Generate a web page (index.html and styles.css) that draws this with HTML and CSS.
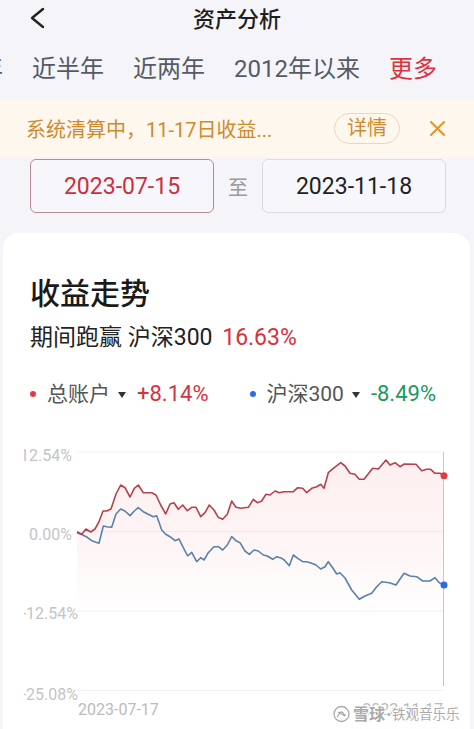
FILE: index.html
```html
<!DOCTYPE html>
<html lang="zh-CN">
<head>
  <meta charset="UTF-8">
  <title>资产分析</title>
  <link rel="stylesheet" href="styles.css">
</head>
<body>
  <header class="topbar">
    <svg class="back" viewBox="0 0 16 22"><polyline points="13,2 2,11 13,20"/></svg>
    <h1>资产分析</h1>
    <span></span>
  </header>

  <nav class="tabs">
    <div class="tabs-track">
      <span>近一年</span>
      <span>近半年</span>
      <span>近两年</span>
      <span>2012年以来</span>
      <span class="more">更多</span>
    </div>
  </nav>

  <div class="notice">
    <span class="notice-text">系统清算中，11-17日收益...</span>
    <span class="notice-btn">详情</span>
    <svg class="notice-close" viewBox="0 0 15 15"><path d="M1 1L14 14M14 1L1 14"/></svg>
  </div>

  <div class="range">
    <div class="date active">2023-07-15</div>
    <span class="to">至</span>
    <div class="date">2023-11-18</div>
  </div>

  <section class="card">
    <div class="card-head">
      <h2>收益走势</h2>
      <p class="beat">期间跑赢 沪深300 <span class="up pct">16.63%</span></p>
      <div class="legend">
        <span class="dot red"></span>
        <span class="name">总账户</span>
        <span class="caret"></span>
        <span class="val up">+8.14%</span>
        <span class="dot blue second"></span>
        <span class="name">沪深300</span>
        <span class="caret"></span>
        <span class="val down">-8.49%</span>
      </div>
    </div>

    <svg class="chart" viewBox="3 408 467 321" width="467" height="321">
      <defs>
        <linearGradient id="redFill" gradientUnits="userSpaceOnUse" x1="0" y1="460" x2="0" y2="615">
          <stop offset="0" stop-color="#f04a55" stop-opacity="0.09"/>
          <stop offset="0.6" stop-color="#f04a55" stop-opacity="0.05"/>
          <stop offset="1" stop-color="#f04a55" stop-opacity="0"/>
        </linearGradient>
        <clipPath id="labelClip"><rect x="24" y="408" width="446" height="321"/></clipPath>
      </defs>

      <g class="grid">
        <line x1="77" y1="452" x2="443" y2="452"/>
        <line x1="77" y1="531.5" x2="443" y2="531.5"/>
        <line x1="77" y1="611" x2="443" y2="611"/>
        <line x1="77" y1="690.5" x2="443" y2="690.5"/>
      </g>

      <g class="ylabels" clip-path="url(#labelClip)">
        <text x="72" y="460.7">12.54%</text>
        <text x="72" y="539.7">0.00%</text>
        <text x="78" y="618.7">-12.54%</text>
        <text x="78" y="699.7">-25.08%</text>
      </g>

      <polygon class="area" points="77,531.7 81.7,534.3 86,529 90.7,532 95,529 99,521.7 103,511 106.7,511 111,509 116,494 120.7,485 125,487.7 130,497 134.3,488.3 138.3,485 143.3,492.7 151.7,492.7 156,495 160.7,505 165.7,514 170,504 174,502.7 178.3,509.3 182.7,505 187.3,510.7 191.7,507.3 196,507.3 200.7,516.7 205,512.7 209.3,505 214,510 218.3,517.3 222.7,519.3 227.3,514.3 231.7,501 236,507.3 240.7,508.3 248.3,507.3 253.3,499.3 257.3,502.7 261.7,501 266,494.3 270,495 275,491 279.3,492.7 284,491.7 293.3,491.7 297.7,487.7 302.7,488.3 306.7,492.7 311.7,488.3 316.7,486.7 320.7,484.3 324,488.3 328.3,472.7 333.3,468.3 340.7,462.7 345,466 350,473.3 355,474.3 359.3,479.3 364,479.3 372.7,468.3 378.3,469 386,460 390,465 395,462.7 400,466.7 404.3,464 416,464.3 421.7,470.7 426.7,469.3 430.7,469.3 435,473.3 440,473.3 444,475.7 444,690 77,690"/>

      <line class="cursor" x1="443.5" y1="452" x2="443.5" y2="686"/>

      <polyline class="line-blue" points="77,532.7 82.7,535 87.3,537.3 91.7,540.7 99,543.3 103.3,526 106.7,526.7 111.7,527.3 116,514 120.7,509 125,511 130,515.7 134.3,511 138.3,507.7 143.3,511.7 148.3,514.3 153.3,516.7 156.7,515.7 161.7,530 165.7,534.3 170,536.7 175,540.7 179,539 183.3,547.7 187.7,556 191.7,552.3 196.7,561.7 200.7,557.7 204,560 208.3,552.7 214,546.7 218.3,546.7 222.7,550 227.3,545 231.7,536.7 236,540.7 240,542.7 245,551 249.3,554.3 254,550 258.3,551 263.3,555 267.3,556 272.7,559.3 276.7,556.7 281.7,558.3 284.3,560 289.3,565.7 293.3,555 297.7,558.3 302.7,561.7 306.7,561.7 311.7,563.3 316,565 320.7,569 325,566.7 328.3,561.7 332.7,567.7 336.7,574 340,572.7 345,578 351.7,590 359.3,599.3 365,596 371.7,593.3 376.7,586.7 381.7,581.7 389.3,582.7 396,585 404,573.3 410,576 416.7,576.7 422.7,581 430,581 435,577.7 439.3,582.7 444,585"/>

      <polyline class="line-red" points="77,531.7 81.7,534.3 86,529 90.7,532 95,529 99,521.7 103,511 106.7,511 111,509 116,494 120.7,485 125,487.7 130,497 134.3,488.3 138.3,485 143.3,492.7 151.7,492.7 156,495 160.7,505 165.7,514 170,504 174,502.7 178.3,509.3 182.7,505 187.3,510.7 191.7,507.3 196,507.3 200.7,516.7 205,512.7 209.3,505 214,510 218.3,517.3 222.7,519.3 227.3,514.3 231.7,501 236,507.3 240.7,508.3 248.3,507.3 253.3,499.3 257.3,502.7 261.7,501 266,494.3 270,495 275,491 279.3,492.7 284,491.7 293.3,491.7 297.7,487.7 302.7,488.3 306.7,492.7 311.7,488.3 316.7,486.7 320.7,484.3 324,488.3 328.3,472.7 333.3,468.3 340.7,462.7 345,466 350,473.3 355,474.3 359.3,479.3 364,479.3 372.7,468.3 378.3,469 386,460 390,465 395,462.7 400,466.7 404.3,464 416,464.3 421.7,470.7 426.7,469.3 430.7,469.3 435,473.3 440,473.3 444,475.7"/>

      <circle class="end-red" cx="444" cy="475.7" r="3.5"/>
      <circle class="end-blue" cx="444" cy="585" r="3.5"/>

      <text class="xlabel" x="78" y="714.7">2023-07-17</text>
      <text class="xlabel" x="443" y="714.7" text-anchor="end">2023-11-17</text>

      <!-- 水印 -->
      <g class="wm">
        <circle cx="341.5" cy="714" r="7.5"/>
        <path d="M337 717c2-1 2-5 4.5-5s2 4 4.5 3M338 712l7 4"/>
      </g>
      <text class="wm-text big" x="353" y="720">雪球</text>
      <text class="wm-text" x="382" y="719">·</text>
      <text class="wm-text" x="392" y="719">铁观音乐乐</text>
    </svg>
  </section>
</body>
</html>
```

FILE: styles.css
```css
body {
  margin: 0;
  width: 474px;
  height: 729px;
  overflow: hidden;
  background: #f5f5f9;
  font-family: Roboto, "Noto Sans CJK SC", sans-serif;
  color: #1f1f1f;
}

.topbar {
  display: grid;
  grid-template-columns: 1fr auto 1fr;
  height: 40px;
}

.back {
  width: 16px;
  height: 22px;
  margin: 7px 0 0 30px;
  fill: none;
  stroke: #222;
  stroke-width: 2.4;
  stroke-linecap: round;
  stroke-linejoin: round;
}

.topbar h1 {
  margin: 0;
  font-size: 22px;
  font-weight: 500;
  line-height: 40px;
}

.tabs {
  height: 60px;
  overflow: hidden;
}

.tabs-track {
  display: flex;
  gap: 29px;
  margin-left: -69px;
  font-size: 24px;
  line-height: 58px;
  color: #555a64;
  white-space: nowrap;
}

.tabs-track .more {
  color: #e0313f;
}

.notice {
  display: flex;
  align-items: center;
  height: 57px;
  padding: 0 29px 0 26px;
  background: #fdf7ee;
  color: #d08a2b;
  font-size: 20px;
}

.notice-btn {
  margin-left: auto;
  height: 29px;
  line-height: 29px;
  padding: 0 12px;
  border: 1px solid #ead8bb;
  border-radius: 16px;
}

.notice-close {
  width: 15px;
  height: 15px;
  margin-left: 30px;
  stroke: #e0952e;
  stroke-width: 2;
  stroke-linecap: round;
}

.range {
  display: flex;
  align-items: center;
  padding: 2px 28px 0 30px;
}

.date {
  display: flex;
  align-items: center;
  justify-content: center;
  width: 184px;
  height: 54px;
  box-sizing: border-box;
  border: 1px solid #dcdae2;
  border-radius: 6px;
  background: #f7f7fb;
  font-size: 23px;
  color: #222;
}

.date.active {
  border-color: #b88a92;
  color: #cb2f3b;
}

.to {
  flex: 1;
  text-align: center;
  font-size: 20px;
  color: #9a9a9a;
}

.card {
  margin: 20px 4px 0 3px;
  background: #fff;
  border-radius: 16px 16px 0 0;
}

.card-head {
  padding: 41px 27px 0;
}

.card-head h2 {
  margin: 0;
  font-size: 30px;
  font-weight: 500;
  line-height: 40px;
  color: #1a1a1a;
}

.beat {
  margin: 9px 0 0;
  font-size: 23px;
  line-height: 30px;
  color: #222;
}

.beat .pct {
  margin-left: 4px;
}

.up {
  color: #d8313d;
}

.down {
  color: #1a9a5c;
}

.legend {
  display: flex;
  align-items: center;
  margin-top: 27px;
  height: 28px;
  font-size: 21px;
  line-height: 28px;
}

.dot {
  width: 6px;
  height: 6px;
  border-radius: 50%;
  margin-right: 11px;
}

.dot.red {
  background: #e23b45;
}

.dot.blue {
  background: #2b6de0;
}

.dot.second {
  margin-left: 41px;
}

.name {
  color: #555;
}

.caret {
  width: 0;
  height: 0;
  margin: 2px 11px 0 8px;
  border-left: 4.5px solid transparent;
  border-right: 4.5px solid transparent;
  border-top: 6px solid #333;
}

.val {
  font-size: 22px;
}

.chart {
  display: block;
}

.grid line {
  stroke: #f2f2f2;
  stroke-width: 1;
}

.ylabels text {
  font-family: Roboto, sans-serif;
  font-size: 16px;
  fill: #c4c4c4;
  text-anchor: end;
}

.area {
  fill: url(#redFill);
}

.cursor {
  stroke: #c8c8c8;
  stroke-width: 1;
}

.line-red,
.line-blue {
  fill: none;
  stroke-width: 1.6;
  stroke-linejoin: round;
}

.line-red {
  stroke: #b8404b;
}

.line-blue {
  stroke: #5a82a8;
}

.end-red {
  fill: #e23b45;
}

.end-blue {
  fill: #2b6de0;
}

.xlabel {
  font-family: Roboto, sans-serif;
  font-size: 16px;
  fill: #bbb;
}

.wm {
  fill: rgba(255, 255, 255, 0.6);
  stroke: #aaa;
  stroke-width: 1.3;
}

.wm-text {
  font-family: "Noto Sans CJK SC", sans-serif;
  font-size: 13.5px;
  fill: #aaa;
  stroke: #fff;
  stroke-width: 2px;
  paint-order: stroke;
}

.wm-text.big {
  font-size: 16px;
  font-weight: 700;
}
```
